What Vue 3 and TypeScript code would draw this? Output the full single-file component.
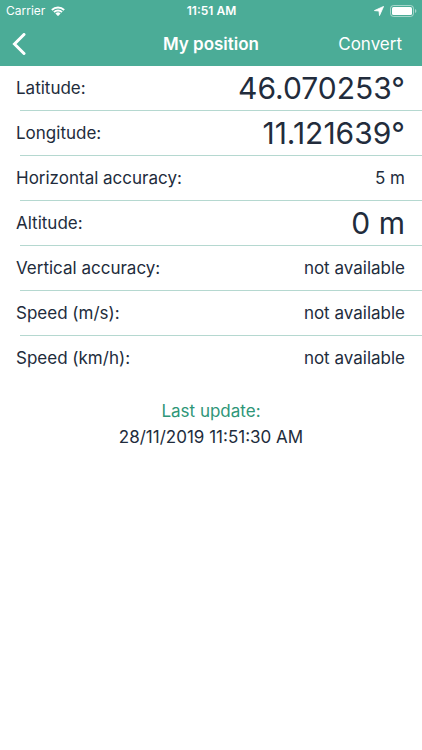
<script setup lang="ts">
interface Reading {
  label: string
  value: string
  large?: boolean
}

const readings: Reading[] = [
  { label: 'Latitude:', value: '46.070253°', large: true },
  { label: 'Longitude:', value: '11.121639°', large: true },
  { label: 'Horizontal accuracy:', value: '5 m' },
  { label: 'Altitude:', value: '0 m', large: true },
  { label: 'Vertical accuracy:', value: 'not available' },
  { label: 'Speed (m/s):', value: 'not available' },
  { label: 'Speed (km/h):', value: 'not available' },
]
</script>

<template>
  <div class="screen">
    <header class="top">
      <div class="status">
        <div class="carrier">
          <span>Carrier</span>
          <svg class="wifi" viewBox="0 0 14 10" aria-hidden="true">
            <path d="M0.2 3.3A9.7 9.7 0 0 1 13.8 3.3L12.5 4.7A7.8 7.8 0 0 0 1.5 4.7Z" />
            <path d="M2.3 5.5A6.7 6.7 0 0 1 11.7 5.5L10.4 6.8A4.8 4.8 0 0 0 3.6 6.8Z" />
            <path d="M4.4 7.6A3.7 3.7 0 0 1 9.6 7.6L7 10.1Z" />
          </svg>
        </div>
        <span class="time">11:51 AM</span>
        <div class="indicators">
          <svg class="location" viewBox="0 0 10 10" aria-hidden="true">
            <path d="M9.6 0.4L5.5 9.6L5 5L0.4 4.6Z" stroke="#fff" stroke-width="0.8" stroke-linejoin="round" />
          </svg>
          <svg class="battery" viewBox="0 0 27 12" aria-hidden="true">
            <rect x="0.5" y="0.5" width="23" height="11" rx="3" fill="none" stroke="#fff" stroke-opacity="0.5" />
            <rect x="2" y="2" width="20" height="8" rx="1.5" />
            <path d="M25 4V8Q26.4 7.4 26.4 6T25 4Z" fill-opacity="0.5" />
          </svg>
        </div>
      </div>
      <nav class="bar">
        <button class="back" type="button" aria-label="Back">
          <svg viewBox="0 0 14 22" aria-hidden="true">
            <path d="M12 1.5L2.5 11L12 20.5" fill="none" stroke="#fff" stroke-width="3" stroke-linecap="round" />
          </svg>
        </button>
        <h1>My position</h1>
        <button class="convert" type="button">Convert</button>
      </nav>
    </header>

    <main>
      <dl class="readings">
        <div v-for="reading in readings" :key="reading.label" class="row">
          <dt>{{ reading.label }}</dt>
          <dd :class="{ large: reading.large }">{{ reading.value }}</dd>
        </div>
      </dl>
      <section class="update">
        <p class="caption">Last update:</p>
        <p>28/11/2019 11:51:30 AM</p>
      </section>
    </main>
  </div>
</template>

<style>
body {
  margin: 0;
  background: #fff;
}
</style>

<style scoped>
.screen {
  min-height: 100vh;
  background: #fff;
  color: #222c3c;
  font-family: Inter, "Liberation Sans", sans-serif;
  font-size: 17px;
  line-height: 26px;
}

.top {
  background: #4bac97;
  color: #fff;
}

.status {
  display: grid;
  grid-template-columns: 1fr auto 1fr;
  align-items: center;
  height: 22px;
  padding: 0 5px 0 6px;
  font-size: 12px;
  line-height: 22px;
}

.carrier,
.indicators {
  display: flex;
  align-items: center;
  gap: 6px;
}

.indicators {
  justify-content: flex-end;
}

.time {
  font-weight: 600;
}

svg {
  display: block;
  fill: #fff;
}

.wifi {
  width: 14px;
  height: 10px;
}

.location {
  width: 10px;
  height: 10px;
}

.battery {
  width: 27px;
  height: 12px;
}

.bar {
  display: grid;
  grid-template-columns: 1fr auto 1fr;
  align-items: center;
  height: 44px;
}

h1 {
  margin: 0;
  font-size: 17px;
  font-weight: 600;
}

button {
  border: 0;
  background: none;
  color: inherit;
  font: inherit;
}

.back {
  justify-self: start;
  padding: 0 12px;
}

.back svg {
  width: 14px;
  height: 22px;
}

.convert {
  justify-self: end;
  padding: 0 20px;
}

.readings {
  margin: 0;
}

.row {
  display: flex;
  align-items: center;
  justify-content: space-between;
  height: 44px;
  margin-left: 20px;
  padding-right: 17px;
  border-bottom: 1px solid #b5d8d0;
}

.row:last-child {
  border-bottom: 0;
}

dt {
  margin-left: -4px;
}

dd {
  margin: 0;
}

.large {
  font-size: 30px;
}

.update {
  padding-top: 18px;
  text-align: center;
}

.update p {
  margin: 0;
}

.update .caption {
  color: #2e9678;
}
</style>
